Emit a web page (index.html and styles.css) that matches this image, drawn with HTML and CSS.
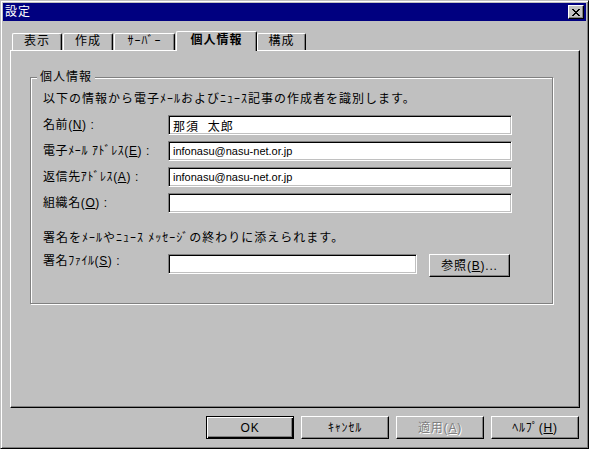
FILE: index.html
```html
<!DOCTYPE html>
<html lang="ja">
<head>
    <meta charset="UTF-8">
    <title>設定</title>
    <link rel="stylesheet" href="styles.css">
</head>
<body>

    <div id="dialog">
        <div id="titlebar">
            <span class="title-text">設定</span>
            <button class="close-btn" type="button">
                <svg width="8" height="7" viewBox="0 0 8 7" shape-rendering="crispEdges">
                    <path fill="#000" d="M0 0h2v1H0zM6 0h2v1H6zM1 1h2v1H1zM5 1h2v1H5zM2 2h4v1H2zM3 3h2v1H3zM2 4h4v1H2zM1 5h2v1H1zM5 5h2v1H5zM0 6h2v1H0zM6 6h2v1H6z"/>
                </svg>
            </button>
        </div>

        <div id="tabs">
            <div class="tab tab-view">表示</div>
            <div class="tab tab-compose">作成</div>
            <div class="tab tab-server">ｻｰﾊﾞｰ</div>
            <div class="tab tab-active">個人情報</div>
            <div class="tab tab-config">構成</div>
        </div>

        <div id="panel">
            <div class="group">
                <span class="group-title">個人情報</span>
                <p class="note">以下の情報から電子ﾒｰﾙおよびﾆｭｰｽ記事の作成者を識別します。</p>

                <div class="rows">
                    <div class="row">
                        <label class="label">名前(<u>N</u>) :</label>
                        <input class="field" type="text" value="那須  太郎">
                    </div>
                    <div class="row">
                        <label class="label">電子ﾒｰﾙ ｱﾄﾞﾚｽ(<u>E</u>) :</label>
                        <input class="field field-latin" type="text" value="infonasu@nasu-net.or.jp">
                    </div>
                    <div class="row">
                        <label class="label">返信先ｱﾄﾞﾚｽ(<u>A</u>) :</label>
                        <input class="field field-latin" type="text" value="infonasu@nasu-net.or.jp">
                    </div>
                    <div class="row">
                        <label class="label">組織名(<u>O</u>) :</label>
                        <input class="field" type="text" value="">
                    </div>
                </div>

                <p class="note note-sig">署名をﾒｰﾙやﾆｭｰｽ ﾒｯｾｰｼﾞの終わりに添えられます。</p>

                <div class="row row-sig">
                    <label class="label">署名ﾌｧｲﾙ(<u>S</u>) :</label>
                    <input class="field field-short" type="text" value="">
                    <button class="btn btn-browse" type="button">参照(<u>B</u>)...</button>
                </div>
            </div>
        </div>

        <div id="buttons">
            <button class="btn btn-default" type="button">OK</button>
            <button class="btn" type="button">ｷｬﾝｾﾙ</button>
            <button class="btn" type="button" disabled>適用(<u>A</u>)</button>
            <button class="btn" type="button">ﾍﾙﾌﾟ(<u>H</u>)</button>
        </div>
    </div>

</body>
</html>
```

FILE: styles.css
```css
body {
    margin: 0;
    background-color: #c0c0c0;
    color: #000;
    font-family: "Liberation Sans", "Noto Sans CJK JP", sans-serif;
    font-size: 12px;
    letter-spacing: 1px;
    line-height: 14px;
}

/* outer window frame */
#dialog {
    width: 589px;
    height: 449px;
    box-sizing: border-box;
    border: 1px solid;
    border-color: #c0c0c0 #000 #000 #c0c0c0;
    box-shadow: inset 1px 1px #fff, inset -1px -1px #808080;
    padding: 2px;
    background-color: #c0c0c0;
    display: flex;
    flex-direction: column;
}

#titlebar {
    height: 18px;
    background-color: #000080;
    color: #fff;
    display: flex;
    align-items: center;
    justify-content: space-between;
    padding: 0 2px 0 2px;
}

.close-btn {
    width: 16px;
    height: 14px;
    padding: 0;
    box-sizing: border-box;
    border: 1px solid;
    border-color: #fff #000 #000 #fff;
    box-shadow: inset -1px -1px #808080;
    background-color: #c0c0c0;
    display: flex;
    align-items: center;
    justify-content: center;
}

.close-btn svg {
    display: block;
    margin-left: -1px;
}

/* tabs */
#tabs {
    position: relative;
    z-index: 1;
    display: flex;
    align-items: flex-end;
    height: 19px;
    margin: 10px 0 0 7px;
    padding-left: 2px;
}

.tab {
    box-sizing: border-box;
    height: 17px;
    border: 1px solid #fff;
    border-bottom: none;
    border-right-color: #000;
    border-radius: 2px 2px 0 0;
    box-shadow: inset -1px 0 #808080;
    margin-right: 1px;
    text-align: center;
    line-height: 15px;
    background-color: #c0c0c0;
}

.tab-view { width: 50px; }
.tab-compose { width: 50px; }
.tab-server { width: 61px; }
.tab-config { width: 49px; }

.tab-active {
    width: 81px;
    height: 20px;
    margin-right: 0;
    margin-bottom: -1px;
    font-weight: bold;
    line-height: 17px;
}

/* tab page */
#panel {
    width: 570px;
    height: 358px;
    box-sizing: border-box;
    margin-left: 7px;
    border: 1px solid;
    border-color: #fff #000 #000 #fff;
    box-shadow: inset -1px -1px #808080;
    padding: 26px 0 0 19px;
}

.group {
    position: relative;
    width: 523px;
    height: 227px;
    box-sizing: border-box;
    border: 1px solid #808080;
    box-shadow: inset 1px 1px #fff, 1px 1px #fff;
    padding: 14px 0 0 12px;
}

.group-title {
    position: absolute;
    top: -8px;
    left: 6px;
    padding: 0 3px;
    background-color: #c0c0c0;
}

.note {
    margin: 0;
}

.note-sig {
    margin-top: 18px;
}

.rows {
    display: flex;
    flex-direction: column;
    gap: 6px;
    margin-top: 9px;
}

.row {
    display: flex;
    align-items: center;
    height: 20px;
}

.row-sig {
    align-items: flex-start;
    margin-top: 9px;
}

.label {
    width: 125px;
    flex-shrink: 0;
    letter-spacing: 0.6px;
}

.field {
    width: 344px;
    height: 20px;
    box-sizing: border-box;
    margin: 0;
    padding: 0 4px;
    border: 1px solid;
    border-color: #808080 #fff #fff #808080;
    box-shadow: inset 1px 1px #000, inset -1px -1px #c0c0c0;
    background-color: #fff;
    font: inherit;
    letter-spacing: 1px;
    color: #000;
    outline: none;
}

.field-latin {
    font-family: "Liberation Sans", sans-serif;
    font-size: 11px;
    letter-spacing: 0;
}

.field-short {
    width: 249px;
    margin-right: 12px;
}

/* push buttons */
.btn {
    width: 88px;
    height: 23px;
    box-sizing: border-box;
    margin: 0;
    padding: 0;
    border: 1px solid;
    border-color: #fff #000 #000 #fff;
    box-shadow: inset -1px -1px #808080;
    background-color: #c0c0c0;
    font: inherit;
    letter-spacing: 0.8px;
    color: #000;
}

.btn-browse {
    width: 81px;
}

.btn-default {
    border-color: #000;
    box-shadow: inset 1px 1px #fff, inset -1px -1px #000, inset -2px -2px #808080;
}

.btn:disabled {
    color: #808080;
    text-shadow: 1px 1px #fff;
}

#buttons {
    display: flex;
    justify-content: flex-end;
    gap: 7px;
    margin-top: 8px;
    padding-right: 7px;
}
```
